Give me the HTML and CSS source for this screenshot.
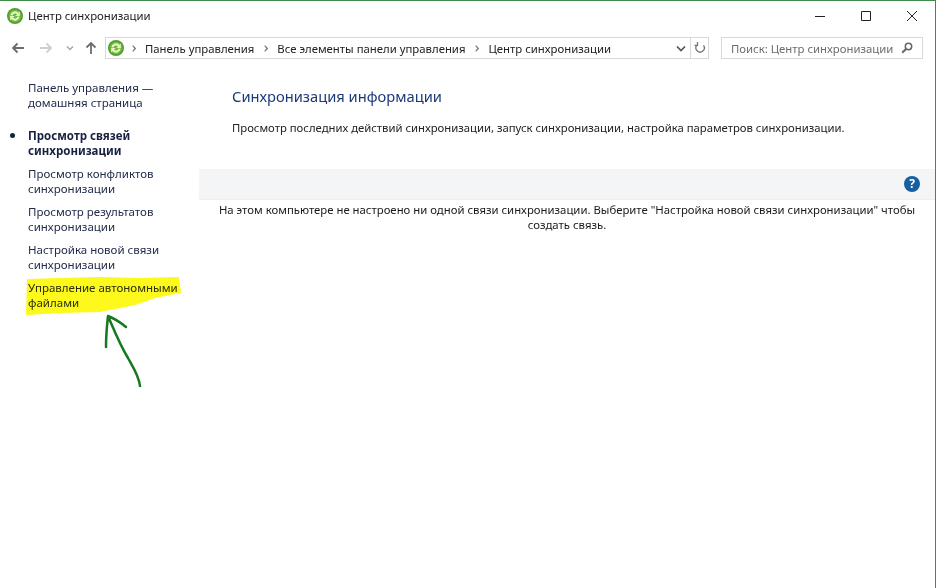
FILE: index.html
```html
<!DOCTYPE html>
<html lang="ru">
<head>
<meta charset="utf-8">
<title>Центр синхронизации</title>
<link rel="stylesheet" href="styles.css">
</head>
<body>
<div class="window">
  <header class="titlebar">
    <svg class="app-icon" viewBox="0 0 16 16"><circle cx="8" cy="8" r="8" fill="#4f9e2e"/><circle cx="8" cy="8" r="6.5" fill="#6ab83c"/><path d="M3.300 7.300A4.800 4.800 0 0 1 11.400 4.800L12.800 3.400V8H8.200L10 6.300A2.600 2.600 0 0 0 5.600 7.500Z" fill="#e8f4c0"/><path d="M12.700 8.700A4.800 4.800 0 0 1 4.600 11.200L3.200 12.600V8H7.800L6 9.700A2.600 2.600 0 0 0 10.400 8.500Z" fill="#e8f4c0"/></svg>
    <span class="title">Центр синхронизации</span>
    <div class="controls">
      <svg class="ctl" viewBox="0 0 46 16"><path d="M18 8.500H28" stroke="#222" fill="none"/></svg>
      <svg class="ctl" viewBox="0 0 46 16"><path d="M18.500 3.500H27.500V12.500H18.500Z" stroke="#222" fill="none"/></svg>
      <svg class="ctl" viewBox="0 0 46 16"><path d="M18 3L28 13M28 3L18 13" stroke="#222" fill="none"/></svg>
    </div>
  </header>
  <nav class="navbar">
    <div class="nav-buttons">
      <svg class="nav-arrow" viewBox="0 0 14 12"><path d="M13 6H2M6.500 1.500L2 6L6.500 10.500" stroke="#6d6d6d" stroke-width="1.800" fill="none"/></svg>
      <svg class="nav-arrow" viewBox="0 0 14 12"><path d="M1 6H12M7.500 1.500L12 6L7.500 10.500" stroke="#cfcfcf" stroke-width="1.800" fill="none"/></svg>
      <svg class="nav-chev" viewBox="0 0 8 6"><path d="M1 1.500L4 4.500L7 1.500" stroke="#a8a8a8" stroke-width="1.500" fill="none"/></svg>
      <svg class="nav-up" viewBox="0 0 12 14"><path d="M6 13V2M1.500 6.500L6 2L10.500 6.500" stroke="#6d6d6d" stroke-width="1.800" fill="none"/></svg>
    </div>
    <div class="address">
      <svg class="addr-icon" viewBox="0 0 16 16"><circle cx="8" cy="8" r="8" fill="#4f9e2e"/><circle cx="8" cy="8" r="6.500" fill="#6ab83c"/><path d="M3.300 7.300A4.800 4.800 0 0 1 11.400 4.800L12.800 3.400V8H8.200L10 6.300A2.600 2.600 0 0 0 5.600 7.500Z" fill="#e8f4c0"/><path d="M12.700 8.700A4.800 4.800 0 0 1 4.600 11.200L3.200 12.600V8H7.800L6 9.700A2.600 2.600 0 0 0 10.400 8.500Z" fill="#e8f4c0"/></svg>
      <svg class="crumb-sep" viewBox="0 0 4 7"><path d="M0.700 0.700L3.300 3.500L0.700 6.300" stroke="#777" stroke-width="1.200" fill="none"/></svg>
      <span class="crumb">Панель управления</span>
      <svg class="crumb-sep" viewBox="0 0 4 7"><path d="M0.700 0.700L3.300 3.500L0.700 6.300" stroke="#777" stroke-width="1.200" fill="none"/></svg>
      <span class="crumb">Все элементы панели управления</span>
      <svg class="crumb-sep" viewBox="0 0 4 7"><path d="M0.700 0.700L3.300 3.500L0.700 6.300" stroke="#777" stroke-width="1.200" fill="none"/></svg>
      <span class="crumb">Центр синхронизации</span>
      <svg class="addr-drop" viewBox="0 0 10 7"><path d="M1 1.500L5 5.500L9 1.500" stroke="#555" stroke-width="1.700" fill="none"/></svg>
      <span class="addr-refresh"><svg viewBox="0 0 12 14"><path d="M9.500 4.300A4.200 4.200 0 1 1 3 4M3.500 1V4.300H0.500" stroke="#777" stroke-width="1.300" fill="none"/></svg></span>
    </div>
    <div class="search">
      <span class="search-text">Поиск: Центр синхронизации</span>
      <svg class="search-icon" viewBox="0 0 12 12"><circle cx="7.500" cy="4.500" r="3.200" stroke="#666" stroke-width="1.500" fill="none"/><path d="M5 7L1.200 10.800" stroke="#666" stroke-width="2" fill="none"/></svg>
    </div>
  </nav>
  <div class="body">
    <aside class="sidebar">
      <a class="side-link home">Панель управления — домашняя страница</a>
      <a class="side-link current">Просмотр связей синхронизации</a>
      <a class="side-link">Просмотр конфликтов синхронизации</a>
      <a class="side-link">Просмотр результатов синхронизации</a>
      <a class="side-link">Настройка новой связи синхронизации</a>
      <a class="side-link marked">Управление автономными файлами</a>
    </aside>
    <main class="content">
      <div class="intro">
        <h1 class="heading">Синхронизация информации</h1>
        <p class="desc">Просмотр последних действий синхронизации, запуск синхронизации, настройка параметров синхронизации.</p>
      </div>
      <div class="toolbar"><span class="help">?</span></div>
      <p class="empty">На этом компьютере не настроено ни одной связи синхронизации. Выберите "Настройка новой связи синхронизации" чтобы создать связь.</p>
    </main>
  </div>
</div>
<svg class="scribble" viewBox="0 0 936 588">
  <path d="M28 280L60 279L100 278L140 279L178 278L180 292L155 297L135 304L100 311L60 312L27 314Z" fill="#fdf91c" stroke="#fdf91c" stroke-width="2" stroke-linejoin="round"/>
  <path d="M106 347C106 335 107 325 108 316C114 330 120 345 128 358C133 367 139 376 140 386M108 316C113 318 120 322 126 327" stroke="#16791f" stroke-width="2.500" fill="none" stroke-linecap="round" stroke-linejoin="round"/>
</svg>
</body>
</html>
```
FILE: styles.css
```css
html, body { margin: 0; padding: 0; background: #fff; }
body { width: 936px; height: 588px; overflow: hidden; position: relative; font-family: "Noto Sans", "Open Sans", sans-serif; font-size: 11.35px; color: #1a1a1a; }
.window { width: 935px; height: 587px; border-top: 1px solid #3f8a45; border-right: 1px solid #3f8a45; }
.titlebar { height: 29px; display: flex; align-items: center; padding-left: 7px; }
.app-icon { width: 16px; height: 16px; flex: none; }
.title { margin-left: 5px; color: #222; flex: 1; }
.controls { display: flex; flex: none; }
.ctl { width: 46px; height: 16px; }
.navbar { height: 30px; display: flex; align-items: center; padding-left: 11px; margin-top: 3px; }
.nav-buttons { display: flex; align-items: center; width: 94px; flex: none; }
.nav-arrow { width: 14px; height: 12px; margin-right: 14px; }
.nav-chev { width: 8px; height: 6px; margin-right: 11px; margin-left: -1px; }
.nav-up { width: 12px; height: 14px; }
.address { width: 600px; height: 20px; flex: none; border: 1px solid #d9d9d9; display: flex; align-items: center; padding-left: 2px; }
.addr-icon { width: 16px; height: 16px; margin-right: -2px; }
.crumb-sep { width: 4px; height: 7px; margin: 0 9px 0 10px; flex: none; }
.crumb { color: #222; }
.addr-drop { width: 10px; height: 7px; margin-left: auto; margin-right: 4px; }
.addr-refresh { width: 17px; height: 20px; border-left: 1px solid #d9d9d9; display: flex; align-items: center; justify-content: center; }
.addr-refresh svg { width: 12px; height: 14px; }
.search { width: 182px; height: 20px; flex: none; margin-left: 12px; border: 1px solid #d9d9d9; display: flex; align-items: center; padding: 0 9px; justify-content: space-between; }
.search-text { color: #6d6d6d; }
.search-icon { width: 12px; height: 12px; }
.body { display: flex; margin-top: 17px; }
.sidebar { width: 199px; flex: none; padding: 0 15px 0 28px; box-sizing: border-box; display: flex; flex-direction: column; font-size: 11.5px; }
.side-link { display: block; line-height: 15px; color: #222c4a; margin-bottom: 8px; }
.side-link.home { margin-bottom: 18px; }
.side-link.current { font-weight: 700; color: #16213f; position: relative; }
.side-link.current::before { content: ""; position: absolute; left: -18px; top: 5px; width: 5px; height: 5px; border-radius: 50%; background: #16213f; }
.side-link.marked { color: #2a2f2a; }
.content { flex: 1; min-width: 0; }
.intro { padding: 6px 33px 0; height: 83px; }
.heading { margin: 0; font-size: 14.7px; font-weight: 400; color: #1c3a78; line-height: 20px; }
.desc { margin: 14px 0 0; line-height: 16px; color: #222; font-size: 11.3px; }
.toolbar { height: 30px; background: #f4f5f7; border-bottom: 1px solid #eceef0; display: flex; align-items: center; justify-content: flex-end; padding-right: 15px; }
.help { width: 16px; height: 16px; border-radius: 50%; background: #17609f; color: #fff; font-weight: 700; font-size: 12px; line-height: 16px; text-align: center; }
.empty { margin: 2px 10px 0; line-height: 15px; text-align: center; color: #1a1a1a; }
.scribble { position: absolute; left: 0; top: 0; width: 936px; height: 588px; mix-blend-mode: multiply; pointer-events: none; }
```
